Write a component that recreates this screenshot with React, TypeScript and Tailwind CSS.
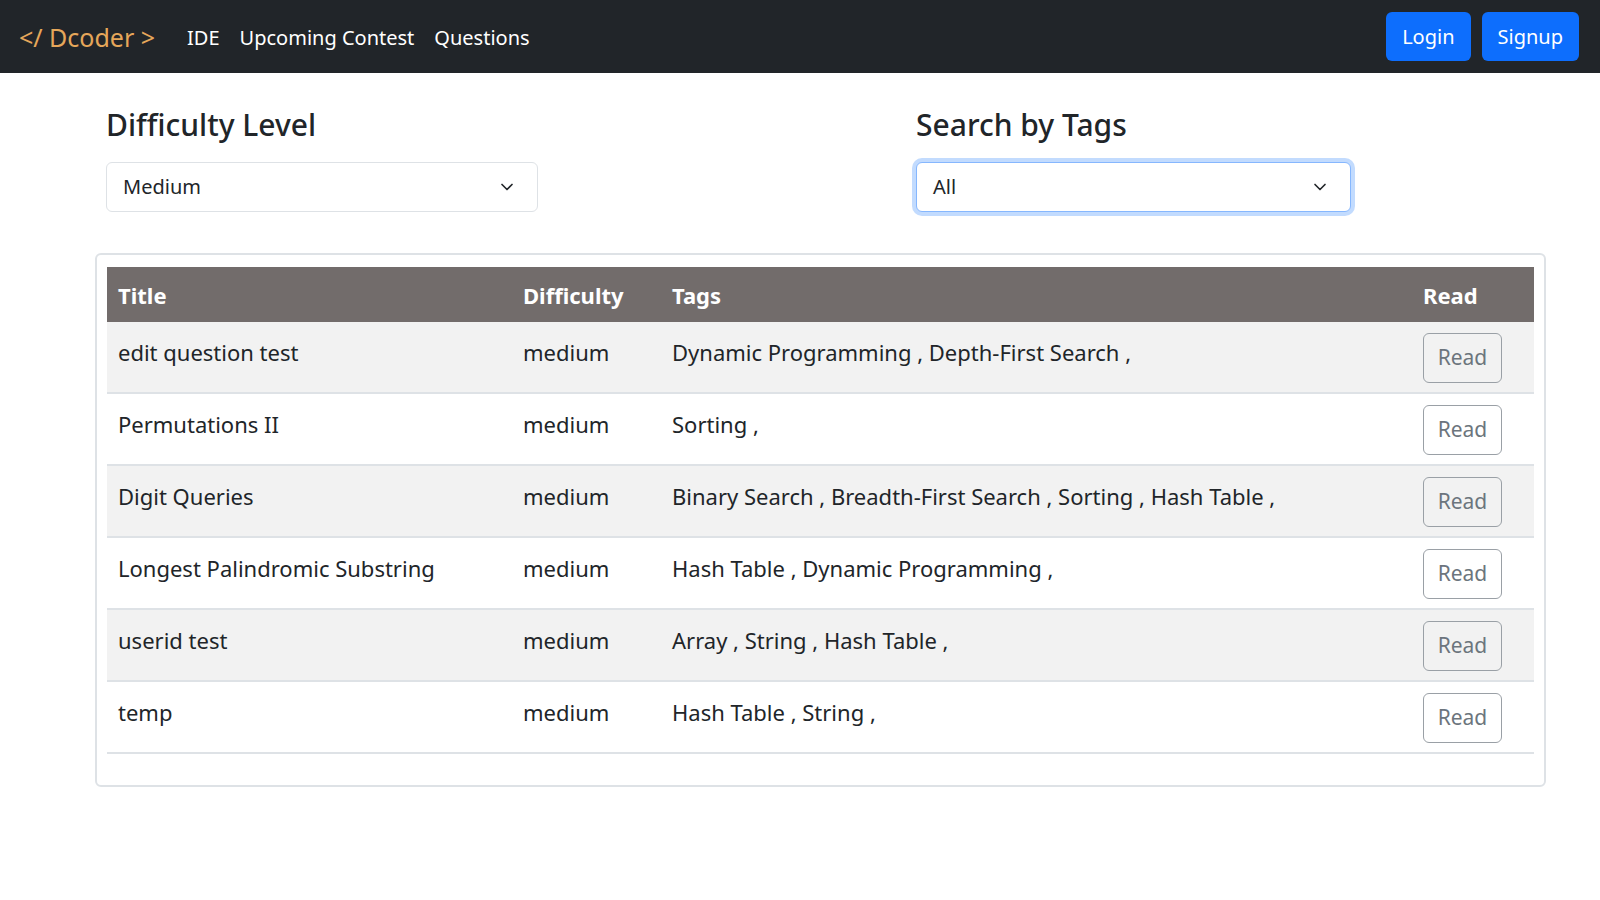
import { ChevronDown } from "lucide-react";

const ROWS = [
  { title: "edit question test", difficulty: "medium", tags: ["Dynamic Programming", "Depth-First Search"] },
  { title: "Permutations II", difficulty: "medium", tags: ["Sorting"] },
  { title: "Digit Queries", difficulty: "medium", tags: ["Binary Search", "Breadth-First Search", "Sorting", "Hash Table"] },
  { title: "Longest Palindromic Substring", difficulty: "medium", tags: ["Hash Table", "Dynamic Programming"] },
  { title: "userid test", difficulty: "medium", tags: ["Array", "String", "Hash Table"] },
  { title: "temp", difficulty: "medium", tags: ["Hash Table", "String"] },
];

function Navbar() {
  return (
    <nav className="h-[73px] bg-[#212529] flex items-center pl-[19px] pr-[21px] pt-[2px]">
      <a className="text-[25px] text-[#e6a75a] mr-[22px]">&lt;/ Dcoder &gt;</a>
      <div className="flex items-center text-[20px] text-white">
        <a className="px-[10px]">IDE</a>
        <a className="px-[10px]">Upcoming Contest</a>
        <a className="px-[10px]">Questions</a>
      </div>
      <div className="ml-auto flex items-center gap-[11px] -mt-[2px]">
        <button className="h-[49px] px-[16px] rounded-[6px] bg-[#0d6efd] text-white text-[20px]">Login</button>
        <button className="h-[49px] px-[16px] rounded-[6px] bg-[#0d6efd] text-white text-[20px]">Signup</button>
      </div>
    </nav>
  );
}

function Select({ value, focused }: { value: string; focused?: boolean }) {
  return (
    <div
      className={
        focused
          ? "h-[50px] w-[435px] rounded-[6px] border border-[#86b7fe] shadow-[0_0_0_4px_rgba(13,110,253,0.25)] bg-white flex items-center pl-[16px] pr-[20px] text-[20px]"
          : "h-[50px] w-[432px] rounded-[6px] border border-[#dee2e6] bg-white flex items-center pl-[16px] pr-[20px] text-[20px]"
      }
    >
      <span>{value}</span>
      <ChevronDown className="ml-auto w-[20px] h-[20px]" strokeWidth={2} />
    </div>
  );
}

export default function App() {
  return (
    <div className="min-h-screen bg-white text-[#212529]" style={{ fontFamily: '"Noto Sans", "Open Sans", sans-serif' }}>
      <Navbar />

      <div className="flex pl-[106px] pt-[32px]">
        <div className="w-[810px]">
          <h3 className="text-[30px] font-medium leading-[40px] mb-[17px]">Difficulty Level</h3>
          <Select value="Medium" />
        </div>
        <div>
          <h3 className="text-[30px] font-medium leading-[40px] mb-[17px]">Search by Tags</h3>
          <Select value="All" focused />
        </div>
      </div>

      <div className="ml-[95px] w-[1451px] mt-[41px] border-2 border-[#dee2e6] rounded-[6px] pt-[12px] px-[10px] pb-[31px]">
        <table className="w-[1427px] table-fixed border-collapse text-[22px]">
          <colgroup>
            <col className="w-[406px]" />
            <col className="w-[149px]" />
            <col className="w-[751px]" />
            <col className="w-[121px]" />
          </colgroup>
          <thead>
            <tr className="bg-[#726c6b] text-white h-[55px]">
              <th className="text-left font-bold px-[11px] pt-[2px]">Title</th>
              <th className="text-left font-bold px-[10px] pt-[2px]">Difficulty</th>
              <th className="text-left font-bold px-[10px] pt-[2px]">Tags</th>
              <th className="text-left font-bold px-[10px] pt-[2px]">Read</th>
            </tr>
          </thead>
          <tbody>
            {ROWS.map((row, i) => (
              <tr key={i} className={i % 2 === 0 ? "bg-[#f2f2f2] border-b-2 border-[#dee2e6]" : "bg-white border-b-2 border-[#dee2e6]"}>
                <td className="align-top px-[11px] pt-[14px] leading-[33px] h-[70px]">{row.title}</td>
                <td className="align-top px-[10px] pt-[14px] leading-[33px]">{row.difficulty}</td>
                <td className="align-top px-[10px] pt-[14px] leading-[33px]">
                  {row.tags.map((t) => t + " , ").join("").replace(/ , $/, " ,")}
                </td>
                <td className="align-top px-[10px] pt-[11px] pb-[9px]">
                  <button className="h-[50px] w-[79px] rounded-[6px] border border-[#9aa0a6] text-[#6c757d] text-[21px]">Read</button>
                </td>
              </tr>
            ))}
          </tbody>
        </table>
      </div>
    </div>
  );
}
